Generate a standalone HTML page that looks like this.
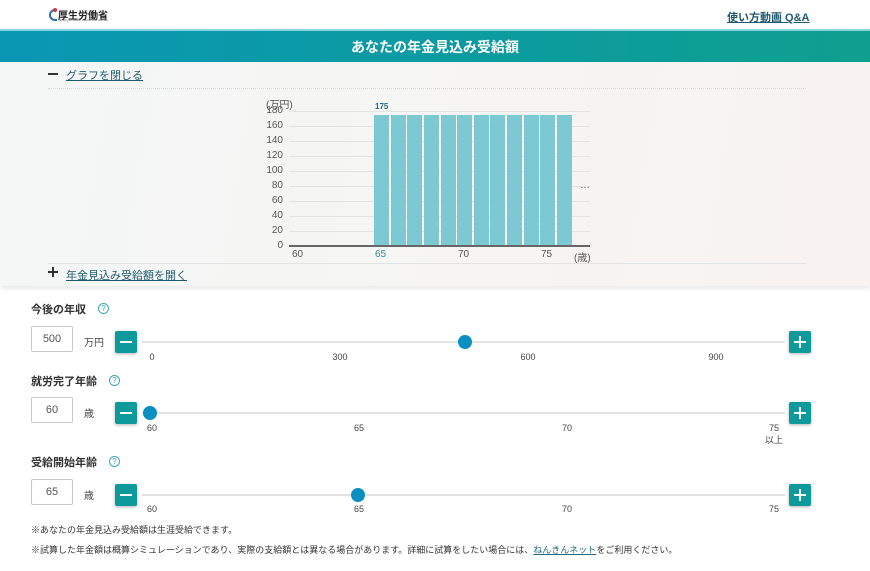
<!DOCTYPE html>
<html><head><meta charset="utf-8"><style>
*{margin:0;padding:0;box-sizing:border-box}
body{width:870px;height:571px;overflow:hidden;background:#fff;font-family:"Liberation Sans","Noto Sans CJK JP",sans-serif;color:#333;position:relative}
.a{position:absolute}
.hdr{left:0;top:29px;width:870px;height:33px;background:linear-gradient(90deg,#0a97b4,#0e9f8f);color:#fff;font-weight:bold;font-size:14px;text-align:center;line-height:33px;border-top:2px solid #8ad4de}
.gbg{left:0;top:62px;width:870px;height:224px;background:linear-gradient(100deg,#f4f7f6,#f6f5f3 60%,#f8f2f0);box-shadow:0 3px 4px rgba(0,0,0,.08)}
.lnk{color:#1f5a6e;text-decoration:underline;font-size:11px}
.yl{font-size:10px;color:#555;width:30px;text-align:right}
.grid{left:289px;width:301px;height:1px;background:#e2e4e4}
.bar{top:115px;width:15px;height:131px;background:#7cc9d4}
.xl{font-size:10px;color:#555;top:249px}
.lbl{font-size:11px;font-weight:bold;color:#333;left:31px}
.q{width:11px;height:11px;border:1px solid #3aa7b6;border-radius:50%;color:#3aa7b6;font-size:8px;text-align:center;line-height:9px;font-weight:normal}
.box{left:31px;width:42px;height:26px;border:1px solid #c8c8c8;border-radius:2px;font-size:11px;color:#555;text-align:center;line-height:24px}
.unit{font-size:10px;color:#444}
.btn{width:22px;height:22px;background:#0e9a9a;border-radius:2px;box-shadow:0 1px 3px rgba(0,0,0,.3)}
.btn:before{content:"";position:absolute;left:5px;top:10px;width:12px;height:2px;background:#fff}
.pl:after{content:"";position:absolute;left:10px;top:5px;width:2px;height:12px;background:#fff}
.trk{left:142px;width:643px;height:2px;background:#e3e3e3}
.th{width:14px;height:14px;border-radius:50%;background:#0a8fc0}
.tk{font-size:9px;color:#444;width:40px;text-align:center}
.nt{font-size:9px;color:#333;left:31px}
</style></head><body>
<div class="a" style="left:49px;top:9px;width:8px;height:12px;border:2px solid #2a6fb8;border-right:none;border-radius:6px 0 0 6px"></div>
<div class="a" style="left:53px;top:8px;width:4px;height:4px;border-radius:50%;background:#d33"></div>
<div class="a" style="left:58px;top:7px;font-size:10px;font-weight:bold;color:#222">厚生労働省</div>
<div class="a" style="left:58px;top:18px;font-size:3px;color:#666">Ministry of Health,Labour and Welfare</div>
<div class="a" style="left:727px;top:9px;font-size:11px;font-weight:bold;color:#1f5a6e;text-decoration:underline">使い方動画&nbsp;Q&amp;A</div>
<div class="a hdr">あなたの年金見込み受給額</div>
<div class="a gbg"></div>
<div class="a" style="left:48px;top:73px;width:10px;height:2px;background:#333"></div>
<div class="a lnk" style="left:66px;top:67px">グラフを閉じる</div>
<div class="a" style="left:48px;top:88px;width:758px;border-top:1px dotted #d8dcdc"></div>
<div class="a" style="left:48px;top:263px;width:758px;height:1px;background:#e0e4e4"></div>
<div class="a" style="left:48px;top:267px;width:10px;height:10px"><div class="a" style="left:0;top:4px;width:10px;height:1.5px;background:#333"></div><div class="a" style="left:4px;top:0;width:1.5px;height:10px;background:#333"></div></div>
<div class="a lnk" style="left:66px;top:267px">年金見込み受給額を開く</div>
<div class="a" style="left:266px;top:96px;font-size:10px;color:#555">(万円)</div>
<div class="a grid" style="top:111px"></div><div class="a grid" style="top:126px"></div><div class="a grid" style="top:141px"></div><div class="a grid" style="top:156px"></div><div class="a grid" style="top:171px"></div><div class="a grid" style="top:186px"></div><div class="a grid" style="top:201px"></div><div class="a grid" style="top:216px"></div><div class="a grid" style="top:231px"></div>
<div class="a yl" style="left:253px;top:105px">180</div><div class="a yl" style="left:253px;top:120px">160</div><div class="a yl" style="left:253px;top:135px">140</div><div class="a yl" style="left:253px;top:150px">120</div><div class="a yl" style="left:253px;top:165px">100</div><div class="a yl" style="left:253px;top:180px">80</div><div class="a yl" style="left:253px;top:195px">60</div><div class="a yl" style="left:253px;top:210px">40</div><div class="a yl" style="left:253px;top:225px">20</div><div class="a yl" style="left:253px;top:240px">0</div>
<div class="a bar" style="left:374px"></div><div class="a bar" style="left:391px"></div><div class="a bar" style="left:407px"></div><div class="a bar" style="left:424px"></div><div class="a bar" style="left:441px"></div><div class="a bar" style="left:457px"></div><div class="a bar" style="left:474px"></div><div class="a bar" style="left:490px"></div><div class="a bar" style="left:507px"></div><div class="a bar" style="left:524px"></div><div class="a bar" style="left:540px"></div><div class="a bar" style="left:557px"></div>
<div class="a" style="left:289px;top:245px;width:301px;height:2px;background:#666"></div>
<div class="a" style="left:375px;top:102px;font-size:8px;font-weight:bold;color:#1f6a80">175</div>
<div class="a" style="left:580px;top:180px;font-size:10px;color:#666">…</div>
<div class="a xl" style="left:292px">60</div><div class="a xl" style="left:375px;color:#2a8aa0">65</div><div class="a xl" style="left:458px">70</div><div class="a xl" style="left:541px">75</div><div class="a xl" style="left:574px">(歳)</div>

<div class="a lbl" style="top:301px">今後の年収</div><div class="a q" style="left:98px;top:303px">?</div>
<div class="a box" style="top:326px">500</div><div class="a unit" style="left:84px;top:334px">万円</div>
<div class="a btn" style="left:115px;top:331px"></div><div class="a trk" style="top:341px"></div><div class="a btn pl" style="left:789px;top:331px"></div>
<div class="a th" style="left:458px;top:335px"></div>
<div class="a tk" style="left:132px;top:352px">0</div><div class="a tk" style="left:320px;top:352px">300</div><div class="a tk" style="left:508px;top:352px">600</div><div class="a tk" style="left:696px;top:352px">900</div>

<div class="a lbl" style="top:373px">就労完了年齢</div><div class="a q" style="left:109px;top:375px">?</div>
<div class="a box" style="top:397px">60</div><div class="a unit" style="left:84px;top:405px">歳</div>
<div class="a btn" style="left:115px;top:402px"></div><div class="a trk" style="top:412px"></div><div class="a btn pl" style="left:789px;top:402px"></div>
<div class="a th" style="left:143px;top:406px"></div>
<div class="a tk" style="left:132px;top:423px">60</div><div class="a tk" style="left:339px;top:423px">65</div><div class="a tk" style="left:547px;top:423px">70</div><div class="a tk" style="left:754px;top:423px">75</div><div class="a tk" style="left:754px;top:433px">以上</div>

<div class="a lbl" style="top:454px">受給開始年齢</div><div class="a q" style="left:109px;top:456px">?</div>
<div class="a box" style="top:479px">65</div><div class="a unit" style="left:84px;top:487px">歳</div>
<div class="a btn" style="left:115px;top:484px"></div><div class="a trk" style="top:494px"></div><div class="a btn pl" style="left:789px;top:484px"></div>
<div class="a th" style="left:351px;top:488px"></div>
<div class="a tk" style="left:132px;top:504px">60</div><div class="a tk" style="left:339px;top:504px">65</div><div class="a tk" style="left:547px;top:504px">70</div><div class="a tk" style="left:754px;top:504px">75</div>

<div class="a nt" style="top:523px">※あなたの年金見込み受給額は生涯受給できます。</div>
<div class="a nt" style="top:543px">※試算した年金額は概算シミュレーションであり、実際の支給額とは異なる場合があります。詳細に試算をしたい場合には、<span style="color:#1f6a80;text-decoration:underline">ねんきんネット</span>をご利用ください。</div>
</body></html>
